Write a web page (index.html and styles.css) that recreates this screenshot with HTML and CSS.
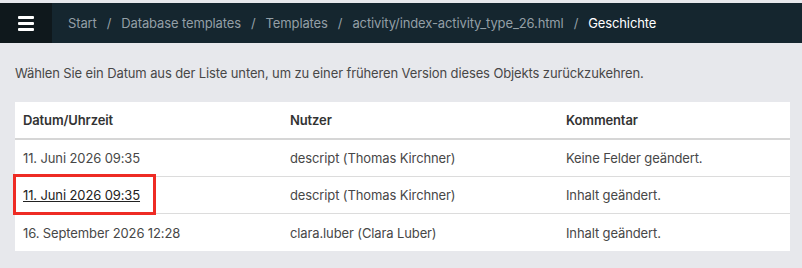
FILE: index.html
```html
<!DOCTYPE html>
<html>
<head>
    <title>Geschichte</title>
    <link rel="stylesheet" href="styles.css">
</head>
<body>
    <div class="topbar">
        <div class="menu-btn">
            <span></span><span></span><span></span>
        </div>
        <nav class="crumbs">
            <a href="#">Start</a><span class="sep">/</span>
            <a href="#">Database templates</a><span class="sep">/</span>
            <a href="#">Templates</a><span class="sep">/</span>
            <a href="#">activity/index-activity_type_26.html</a><span class="sep">/</span>
            <span class="current">Geschichte</span>
        </nav>
    </div>

    <div class="content">
        <p class="intro">Wählen Sie ein Datum aus der Liste unten, um zu einer früheren Version dieses Objekts zurückzukehren.</p>

        <table class="history">
            <thead>
                <tr>
                    <th class="col-date">Datum/Uhrzeit</th>
                    <th class="col-user">Nutzer</th>
                    <th>Kommentar</th>
                </tr>
            </thead>
            <tbody>
                <tr>
                    <td>11. Juni 2026 09:35</td>
                    <td>descript (Thomas Kirchner)</td>
                    <td>Keine Felder geändert.</td>
                </tr>
                <tr>
                    <td class="marked"><a href="#">11. Juni 2026 09:35</a></td>
                    <td>descript (Thomas Kirchner)</td>
                    <td>Inhalt geändert.</td>
                </tr>
                <tr>
                    <td>16. September 2026 12:28</td>
                    <td>clara.luber (Clara Luber)</td>
                    <td>Inhalt geändert.</td>
                </tr>
            </tbody>
        </table>
    </div>
</body>
</html>
```

FILE: styles.css
```css
body {
    margin: 0;
    padding-top: 3px;
    background: #e7e8ec;
    font-family: Inter, "Noto Sans", sans-serif;
    font-size: 13px;
    letter-spacing: -0.12px;
    color: #474747;
}

.topbar {
    display: flex;
    height: 40px;
    background: #15262f;
}

.menu-btn {
    width: 52px;
    background: #0f181c;
    display: flex;
    flex-direction: column;
    justify-content: center;
    align-items: center;
    gap: 3px;
}

.menu-btn span {
    display: block;
    width: 16px;
    height: 3px;
    background: #fff;
    border-radius: 1px;
}

.crumbs {
    display: flex;
    align-items: center;
    padding-left: 16px;
    font-size: 13px;
}

.crumbs a {
    color: #939fa6;
    text-decoration: none;
}

.crumbs .sep {
    color: #939fa6;
    padding: 0 10px;
}

.crumbs .current {
    color: #fff;
}

.content {
    padding: 0 12px 0 15px;
}

.intro {
    margin: 22px 0 21px;
    line-height: 16px;
}

.history {
    width: 775px;
    border-collapse: collapse;
    background: #fff;
}

.history th {
    text-align: left;
    font-weight: 600;
    color: #333;
    height: 36px;
    padding: 0 8px;
    border-bottom: 2px solid #d6d6d6;
}

.history td {
    height: 36px;
    padding: 0 8px;
    border-top: 1px solid #dcdcdc;
}

.history tbody tr:first-child td {
    border-top: none;
}

.history tbody tr:last-child td {
    height: 37px;
}

.col-date {
    width: 251px;
}

.col-user {
    width: 260px;
}

.marked {
    position: relative;
}

.marked a {
    color: #222;
    text-decoration: underline;
}

.marked::after {
    content: "";
    position: absolute;
    left: -2px;
    top: -3px;
    width: 137px;
    height: 35px;
    border: 3px solid #ee2b24;
}
```
